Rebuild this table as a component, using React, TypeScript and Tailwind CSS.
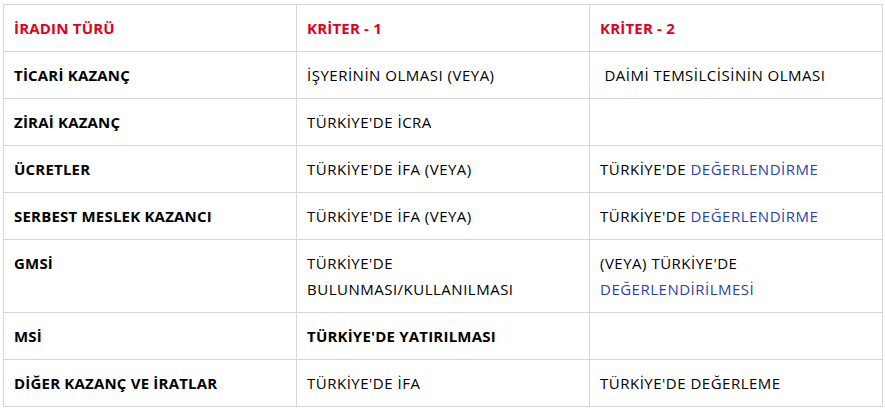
import React from "react";

const blue = "text-[#2b3fae]";

const rows: { a: string; b: React.ReactNode; bBold?: boolean; c: React.ReactNode }[] = [
  { a: "TİCARİ KAZANÇ", b: "İŞYERİNİN OLMASI (VEYA)", c: <>&nbsp;DAİMİ TEMSİLCİSİNİN OLMASI</> },
  { a: "ZİRAİ KAZANÇ", b: "TÜRKİYE'DE İCRA", c: "" },
  { a: "ÜCRETLER", b: "TÜRKİYE'DE İFA (VEYA)", c: <>TÜRKİYE'DE <span className={blue}>DEĞERLENDİRME</span></> },
  { a: "SERBEST MESLEK KAZANCI", b: "TÜRKİYE'DE İFA (VEYA)", c: <>TÜRKİYE'DE <span className={blue}>DEĞERLENDİRME</span></> },
  {
    a: "GMSİ",
    b: <>TÜRKİYE'DE<br />BULUNMASI/KULLANILMASI</>,
    c: <>(VEYA) TÜRKİYE'DE<br /><span className={blue}>DEĞERLENDİRİLMESİ</span></>,
  },
  { a: "MSİ", b: "TÜRKİYE'DE YATIRILMASI", bBold: true, c: "" },
  { a: "DİĞER KAZANÇ VE İRATLAR", b: "TÜRKİYE'DE İFA", c: "TÜRKİYE'DE DEĞERLEME" },
];

export default function App() {
  const td = "border border-[#d6d6d6] align-top px-[10px] py-[10px] leading-[26px]";
  const bold = "font-bold tracking-[0.2px]";
  return (
    <div className="w-[885px] h-[411px] bg-white pt-[4px] pl-[3px]" style={{ fontFamily: '"Open Sans", sans-serif' }}>
      <table className="border-collapse w-[879px] table-fixed text-[15px] tracking-[0.5px] text-black">
        <colgroup>
          <col className="w-[293px]" />
          <col className="w-[293px]" />
          <col className="w-[293px]" />
        </colgroup>
        <tbody>
          <tr>
            <td className={`${td} ${bold} text-[#e2001a]`}>İRADIN TÜRÜ</td>
            <td className={`${td} ${bold} text-[#e2001a]`}>KRİTER - 1</td>
            <td className={`${td} ${bold} text-[#e2001a]`}>KRİTER - 2</td>
          </tr>
          {rows.map((r, i) => (
            <tr key={i}>
              <td className={`${td} ${bold}`}>{r.a}</td>
              <td className={`${td} ${r.bBold ? bold : ""}`}>{r.b}</td>
              <td className={td}>{r.c}</td>
            </tr>
          ))}
        </tbody>
      </table>
    </div>
  );
}
